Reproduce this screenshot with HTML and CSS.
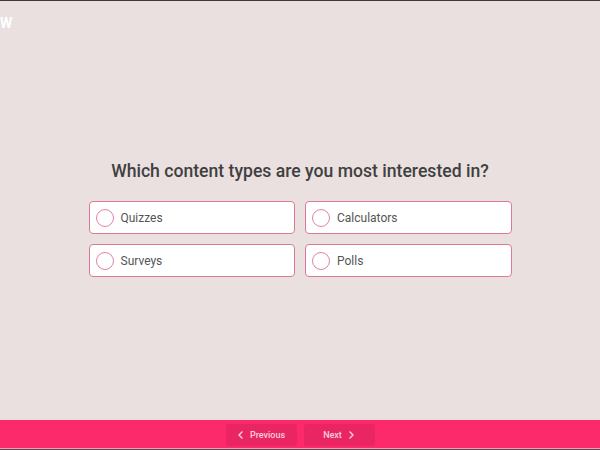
FILE: index.html
```html
<!DOCTYPE html>
<html lang="en">
<head>
    <meta charset="UTF-8">
    <meta name="viewport" content="width=device-width, initial-scale=1.0">
    <title>Content Survey</title>
    <link rel="stylesheet" href="styles.css">
</head>
<body>

    <!-- Header -->
    <header class="header">
        <span class="logo">W</span>
    </header>

    <!-- Question -->
    <main class="main-content">
        <h1 class="question">Which content types are you most interested in?</h1>
        <div class="options">
            <label class="option"><span class="radio"></span>Quizzes</label>
            <label class="option"><span class="radio"></span>Calculators</label>
            <label class="option"><span class="radio"></span>Surveys</label>
            <label class="option"><span class="radio"></span>Polls</label>
        </div>
    </main>

    <!-- Footer -->
    <footer class="footer">
        <button class="nav-btn">
            <svg width="8" height="10" viewBox="0 0 8 10"><path d="M5.5 1.5 L2 5 L5.5 8.5" fill="none" stroke="currentColor" stroke-width="1.4"/></svg>
            Previous
        </button>
        <button class="nav-btn">
            Next
            <svg width="8" height="10" viewBox="0 0 8 10"><path d="M2.5 1.5 L6 5 L2.5 8.5" fill="none" stroke="currentColor" stroke-width="1.4"/></svg>
        </button>
    </footer>

</body>
</html>
```

FILE: styles.css
```css
/* Basic Styles */
body {
    font-family: Roboto, "Liberation Sans", sans-serif;
    margin: 0;
    padding: 0;
    height: 450px;
    display: flex;
    flex-direction: column;
    background-color: #eae0e0;
    border-top: 1px solid #3a3a3a;
    box-sizing: border-box;
    overflow: hidden;
}

/* Header */
.header {
    height: 40px;
}

.logo {
    display: block;
    margin: 13px 0 0 0;
    color: #ffffff;
    font-size: 14px;
    font-weight: 700;
    line-height: 18px;
}

/* Main Content */
.main-content {
    flex: 1;
    display: flex;
    flex-direction: column;
    align-items: center;
    padding-top: 119px;
}

.question {
    margin: 0 0 19px;
    font-size: 17.6px;
    font-weight: 500;
    line-height: 22px;
    color: #404040;
}

.options {
    width: 423px;
    display: grid;
    grid-template-columns: 1fr 1fr;
    gap: 10px;
}

.option {
    height: 33px;
    box-sizing: border-box;
    display: flex;
    align-items: center;
    gap: 7px;
    padding-left: 6px;
    background-color: #ffffff;
    border: 1px solid #dc7a96;
    border-radius: 4px;
    font-size: 12px;
    color: #555555;
    cursor: pointer;
}

.radio {
    width: 18px;
    height: 18px;
    box-sizing: border-box;
    border: 1px solid #e283a0;
    border-radius: 50%;
}

/* Footer */
.footer {
    height: 27px;
    background-color: #fd2a6b;
    display: flex;
    justify-content: center;
    align-items: center;
    gap: 7px;
    border-bottom: 1px solid #f39ab6;
    box-shadow: 0 1px 0 #5a4a4f;
    margin-bottom: 1px;
    padding-top: 1px;
}

.nav-btn {
    width: 71px;
    height: 22px;
    display: flex;
    justify-content: center;
    align-items: center;
    gap: 5px;
    background-color: #ea2563;
    color: #fbd0dd;
    border: none;
    border-radius: 3px;
    font-family: Roboto, "Liberation Sans", sans-serif;
    font-size: 9px;
    font-weight: 500;
    cursor: pointer;
}
```
